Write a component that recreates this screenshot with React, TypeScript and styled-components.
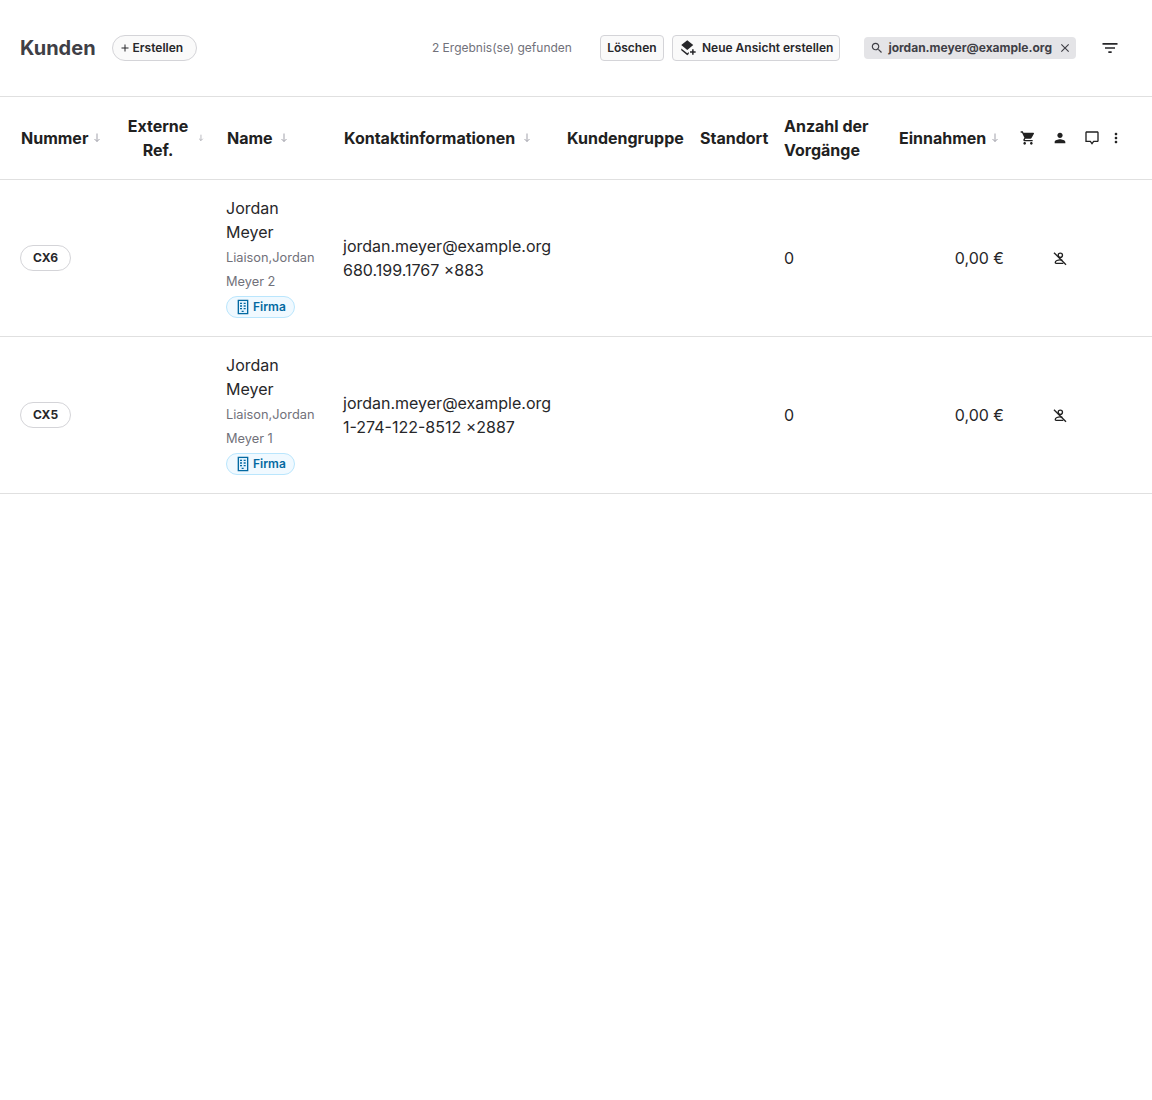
import React from "react";
import styled, { createGlobalStyle } from "styled-components";

const GlobalStyle = createGlobalStyle`
  html, body {
    margin: 0;
    padding: 0;
    background: #fff;
    font-family: Inter, "Liberation Sans", sans-serif;
    color: #212121;
  }
  * { box-sizing: border-box; }
`;

const Page = styled.div`
  width: 1152px;
  min-height: 1100px;
  background: #fff;
`;

const Toolbar = styled.div`
  display: flex;
  align-items: center;
  height: 97px;
  padding: 0 32px 1px 20px;
  border-bottom: 1px solid #e0e0e0;
`;

const Title = styled.h1`
  margin: 0 16px 0 0;
  font-size: 20px;
  line-height: 24px;
  font-weight: 700;
  color: #3f3f46;
`;

const PillButton = styled.button`
  display: flex;
  align-items: center;
  gap: 2px;
  width: 85px;
  height: 26px;
  padding: 0 0 0 6px;
  border: 1px solid #d4d4d8;
  border-radius: 13px;
  background: #fafafa;
  font: 600 12px Inter, sans-serif;
  color: #27272a;
`;

const ResultCount = styled.span`
  margin-left: auto;
  margin-right: 28px;
  font-size: 12px;
  color: #71717a;
`;

const ActionButton = styled.button`
  display: flex;
  align-items: center;
  justify-content: center;
  gap: 5px;
  min-width: 64px;
  height: 26px;
  padding: 0 6px;
  margin-right: 8px;
  border: 1px solid #d4d4d8;
  border-radius: 4px;
  background: #fafafa;
  font: 600 12px Inter, sans-serif;
  color: #27272a;
`;

const SearchChip = styled.div`
  display: flex;
  align-items: center;
  gap: 4px;
  height: 22px;
  margin-left: 16px;
  padding: 0 4px 0 6px;
  border-radius: 4px;
  background: #e4e4e7;
  font-size: 12px;
  font-weight: 700;
  color: #3f3f46;
`;

const ChipClose = styled.span`
  display: flex;
  margin-left: 2px;
`;

const FilterButton = styled.button`
  display: flex;
  margin-left: 24px;
  padding: 0;
  border: 0;
  background: none;
  color: #27272a;
`;

const Table = styled.div`
  display: grid;
  grid-template-columns: 110px 108px 117px 224px 133px 84px 114px 122px 32px 32px 32px 16px 28px;
`;

const Row = styled.div<{ $head?: boolean }>`
  display: grid;
  grid-column: 1 / -1;
  grid-template-columns: subgrid;
  align-items: center;
  min-height: ${(p) => (p.$head ? "83px" : "157px")};
  border-bottom: 1px solid #e0e0e0;
`;

const HeadCell = styled.div<{ $gap?: number; $inset?: number }>`
  display: flex;
  align-items: center;
  gap: ${(p) => p.$gap ?? 5}px;
  padding-left: ${(p) => p.$inset ?? 9}px;
  font-size: 16px;
  line-height: 24px;
  font-weight: 700;
  color: #212121;
`;

const CenteredHead = styled(HeadCell)`
  padding: 0 14px 0 13px;
  text-align: center;
`;

const HeadIcon = styled.div`
  display: flex;
  justify-content: center;
  color: #212121;
`;

const Cell = styled.div<{ $right?: boolean }>`
  padding: 0 8px;
  font-size: 16px;
  line-height: 24px;
  color: #27272a;
  text-align: ${(p) => (p.$right ? "right" : "left")};
`;

const NumberCell = styled.div`
  display: flex;
  padding-left: 20px;
`;

const NumberBadge = styled.span`
  display: flex;
  align-items: center;
  justify-content: center;
  width: 51px;
  height: 26px;
  padding-bottom: 1px;
  border: 1px solid #d4d4d8;
  border-radius: 13px;
  font-size: 12px;
  font-weight: 700;
  color: #27272a;
`;

const SubName = styled.div`
  margin-top: 2px;
  font-size: 12.8px;
  color: #71717a;
`;

const CompanyTag = styled.span`
  display: flex;
  align-items: center;
  gap: 2px;
  width: fit-content;
  height: 22px;
  margin: 2px 0;
  padding: 0 8px;
  border: 1px solid #bae6fd;
  border-radius: 11px;
  background: #f0f9ff;
  font-size: 12px;
  font-weight: 600;
  color: #0369a1;
`;

const IconCell = styled.div`
  display: flex;
  justify-content: center;
  color: #212121;
`;

const Icon = ({ d, size = 16 }: { d: string; size?: number }) => (
  <svg width={size} height={size} viewBox="0 0 24 24" fill="currentColor">
    <path d={d} />
  </svg>
);

const SortArrow = () => (
  <svg width="8" height="10" viewBox="0 0 8 10" fill="none" stroke="#a1a1aa" strokeWidth="1">
    <path d="M4 0.5v8M1.5 6L4 8.5 6.5 6" />
  </svg>
);

const BuildingIcon = () => (
  <svg width="16" height="16" viewBox="0 0 24 24">
    <rect x="4" y="2" width="16" height="20" fill="#e0f2fe" />
    <path
      fill="currentColor"
      d="M4 1h16v22H4V1zm2 2v18h12V3H6zm1.5 2.5h3v2h-3v-2zm5.5 0h3v2h-3v-2zm-5.5 4h3v2h-3v-2zm5.5 0h3v2h-3v-2zm-5.5 4h3v2h-3v-2zm5.5 0h3v2h-3v-2zm-3 4h3v2h-3v-2z"
    />
  </svg>
);

const PersonOffIcon = () => (
  <svg width="16" height="16" viewBox="0 -1 24 24" fill="none" stroke="currentColor" strokeWidth="2">
    <circle cx="12.5" cy="7" r="3.2" />
    <path d="M5 19v-1.6c0-2.3 4-3.6 7-3.6 1.2 0 2.5.2 3.6.6M5 19h12" />
    <path d="M3 3l18 18" />
  </svg>
);

const icons = {
  cart: "M7 18c-1.1 0-1.99.9-1.99 2S5.9 22 7 22s2-.9 2-2-.9-2-2-2zM1 2v2h2l3.6 7.59-1.35 2.45c-.16.28-.25.61-.25.96 0 1.1.9 2 2 2h12v-2H7.42c-.14 0-.25-.11-.25-.25l.03-.12.9-1.63h7.45c.75 0 1.41-.41 1.75-1.03l3.58-6.49c.08-.14.12-.31.12-.48 0-.55-.45-1-1-1H5.21l-.94-2H1zm16 16c-1.1 0-1.99.9-1.99 2s.89 2 1.99 2 2-.9 2-2-.9-2-2-2z",
  person: "M12 12c2.21 0 4-1.79 4-4s-1.79-4-4-4-4 1.79-4 4 1.79 4 4 4zm0 2c-2.67 0-8 1.34-8 4v2h16v-2c0-2.66-5.33-4-8-4z",
  comment: "M20 2H4c-1.1 0-2 .9-2 2v14h7l3 4 3-4h5c1.1 0 2-.9 2-2V4c0-1.1-.9-2-2-2zm0 14h-6l-2 2.6L10 16H4V4h16v12z",
  more: "M12 8c1.1 0 2-.9 2-2s-.9-2-2-2-2 .9-2 2 .9 2 2 2zm0 2c-1.1 0-2 .9-2 2s.9 2 2 2 2-.9 2-2-.9-2-2-2zm0 6c-1.1 0-2 .9-2 2s.9 2 2 2 2-.9 2-2-.9-2-2-2z",
  filter: "M10 18h4v-2h-4v2zM3 6v2h18V6H3zm3 7h12v-2H6v2z",
  search: "M15.5 14h-.79l-.28-.27C15.41 12.59 16 11.11 16 9.5 16 5.91 13.09 3 9.5 3S3 5.91 3 9.5 5.91 16 9.5 16c1.61 0 3.09-.59 4.23-1.57l.27.28v.79l5 4.99L20.49 19l-4.99-5zm-6 0C7.01 14 5 11.99 5 9.5S7.01 5 9.5 5 14 7.01 14 9.5 11.99 14 9.5 14z",
  close: "M19 6.41 17.59 5 12 10.59 6.41 5 5 6.41 10.59 12 5 17.59 6.41 19 12 13.41 17.59 19 19 17.59 13.41 12z",
  plus: "M19 13h-6v6h-2v-6H5v-2h6V5h2v6h6v2z",
  layersAdd: "M11 1.5 3 8l8 6.5L19 8l-8-6.5zM3 12.5l8 6.5 2-1.6v2.5L11 21.5l-8-6.5v-2.5zm14.5 1h2v2.7h2.7v2h-2.7v2.8h-2v-2.8h-2.8v-2h2.8v-2.7z",
};

type Customer = { id: string; sub: string; phone: string };

const customers: Customer[] = [
  { id: "CX6", sub: "Meyer 2", phone: "680.199.1767 ×883" },
  { id: "CX5", sub: "Meyer 1", phone: "1-274-122-8512 ×2887" },
];

export default function App() {
  return (
    <Page>
      <GlobalStyle />
      <Toolbar>
        <Title>Kunden</Title>
        <PillButton>
          <Icon d={icons.plus} size={12} />
          Erstellen
        </PillButton>
        <ResultCount>2 Ergebnis(se) gefunden</ResultCount>
        <ActionButton>Löschen</ActionButton>
        <ActionButton>
          <Icon d={icons.layersAdd} size={18} />
          Neue Ansicht erstellen
        </ActionButton>
        <SearchChip>
          <Icon d={icons.search} size={14} />
          jordan.meyer@example.org
          <ChipClose>
            <Icon d={icons.close} size={14} />
          </ChipClose>
        </SearchChip>
        <FilterButton>
          <Icon d={icons.filter} size={20} />
        </FilterButton>
      </Toolbar>
      <Table>
        <Row $head>
          <HeadCell $inset={21}>Nummer <SortArrow /></HeadCell>
          <CenteredHead>Externe Ref. <SortArrow /></CenteredHead>
          <HeadCell $gap={7}>Name <SortArrow /></HeadCell>
          <HeadCell $gap={8}>Kontaktinformationen <SortArrow /></HeadCell>
          <HeadCell $inset={8}>Kundengruppe</HeadCell>
          <HeadCell $inset={8}>Standort</HeadCell>
          <HeadCell $inset={8}>Anzahl der Vorgänge</HeadCell>
          <HeadCell>Einnahmen <SortArrow /></HeadCell>
          <HeadIcon><Icon d={icons.cart} /></HeadIcon>
          <HeadIcon><Icon d={icons.person} /></HeadIcon>
          <HeadIcon><Icon d={icons.comment} /></HeadIcon>
          <HeadIcon><Icon d={icons.more} /></HeadIcon>
        </Row>
        {customers.map((c) => (
          <Row key={c.id}>
            <NumberCell><NumberBadge>{c.id}</NumberBadge></NumberCell>
            <div />
            <Cell>
              Jordan Meyer
              <SubName>Liaison,Jordan {c.sub}</SubName>
              <CompanyTag>
                <BuildingIcon />
                Firma
              </CompanyTag>
            </Cell>
            <Cell>
              jordan.meyer@example.org
              <br />
              {c.phone}
            </Cell>
            <div />
            <div />
            <Cell>0</Cell>
            <Cell $right>0,00 €</Cell>
            <div />
            <IconCell><PersonOffIcon /></IconCell>
          </Row>
        ))}
      </Table>
    </Page>
  );
}
